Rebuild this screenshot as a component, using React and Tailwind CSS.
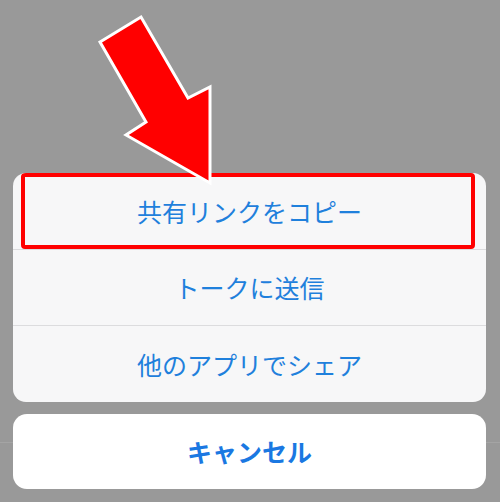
import React from "react";

export default function App() {
  const font = { fontFamily: '"Noto Sans CJK JP", "Noto Sans", sans-serif' };
  return (
    <div
      className="relative w-[500px] h-[502px] overflow-hidden bg-[linear-gradient(to_bottom,#999999_442px,#a4a4a4_442px,#a4a4a4_443px,#999999_443px)] flex flex-col px-[13px] pt-[173px]"
      style={font}
    >
      <div className="w-[473px] bg-[#f7f7f8] rounded-[13px] flex flex-col overflow-hidden">
        <div className="h-[76px] flex">
          <div className="ml-[8px] mr-[11px] flex-1 border-[4px] border-[#ff0000] rounded-[4px] flex items-center justify-center">
            <span className="text-[25px] leading-none text-[#1f80dc] ml-[3px]">共有リンクをコピー</span>
          </div>
        </div>
        <div className="h-px bg-[#dcdcde]" />
        <div className="h-[75px] flex items-center justify-center">
          <span className="text-[25px] leading-none text-[#1f80dc]">トークに送信</span>
        </div>
        <div className="h-px bg-[#dcdcde]" />
        <div className="h-[76px] flex items-center justify-center">
          <span className="text-[25px] leading-none text-[#1f80dc]">他のアプリでシェア</span>
        </div>
      </div>
      <div className="mt-[12px] w-[473px] h-[75px] bg-white rounded-[14px] flex items-center justify-center">
        <span className="text-[25px] leading-none font-bold text-[#1a78e2]">キャンセル</span>
      </div>
      <svg
        className="absolute left-0 top-0"
        width="500"
        height="200"
        viewBox="0 0 500 200"
      >
        <polygon
          points="100,42 141,17 188,98 210,87 210,183 126,135 146,122"
          fill="#ff0000"
          stroke="#ffffff"
          strokeWidth="3"
          strokeLinejoin="miter"
        />
      </svg>
    </div>
  );
}
